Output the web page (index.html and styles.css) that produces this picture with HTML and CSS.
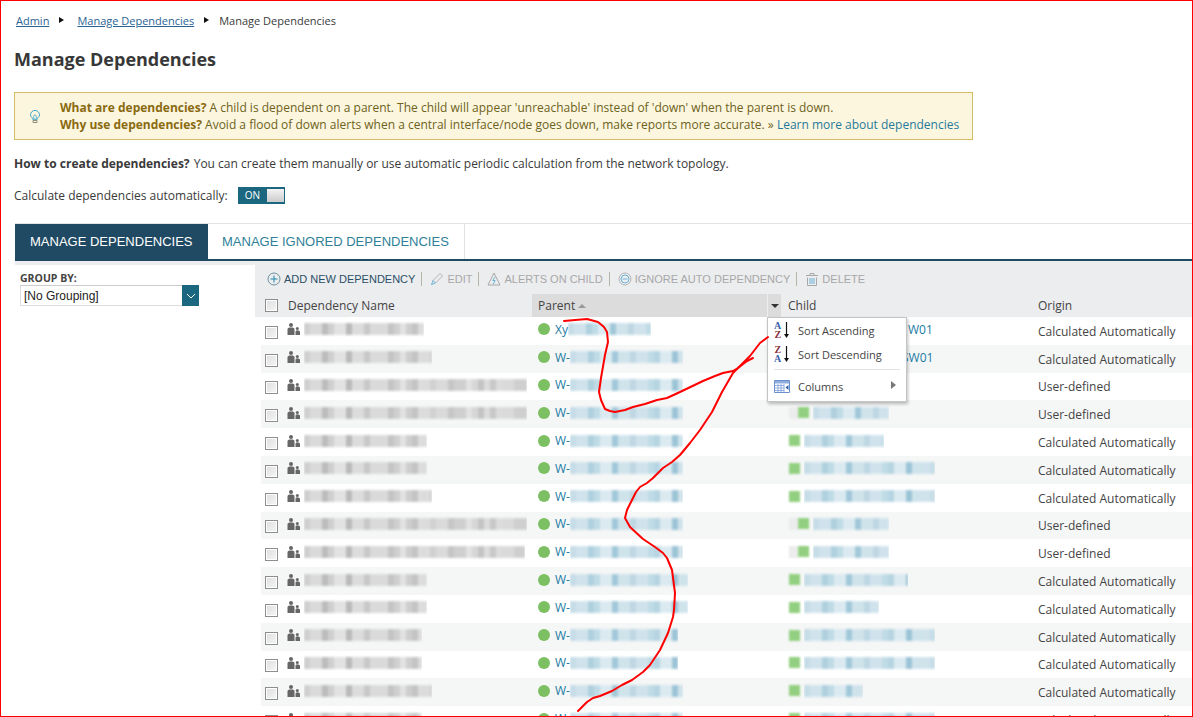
FILE: index.html
```html
<!DOCTYPE html>
<html lang="en">
<head>
<meta charset="utf-8">
<title>Manage Dependencies</title>
<link rel="stylesheet" href="styles.css">
</head>
<body>
<svg width="0" height="0" class="defs"><defs><symbol id="people" viewBox="0 0 13 12"><circle cx="4" cy="2" r="2"/><path d="M0.500 12V6.500C.5 5 1.500 4.500 4 4.500S7.500 5 7.500 6.500V12z"/><circle cx="10.300" cy="5.500" r="1.500"/><path d="M8.500 12V9c0-1 .5-1.700 1.800-1.700S13 8 13 9v3z"/></symbol></defs></svg>
<div class="frame">
  <nav class="crumbs">
    <a href="#">Admin</a><span class="crumb-arrow"></span>
    <a href="#">Manage Dependencies</a><span class="crumb-arrow crumb-arrow-last"></span>
    <span>Manage Dependencies</span>
  </nav>
  <h1 class="title">Manage Dependencies</h1>
  <div class="hint">
    <svg class="hint-icon" viewBox="0 0 10 13" width="10" height="13"><path d="M2.700 8.300C1.500 7.500.5 6.400.5 4.900a4.500 4.500 0 0 1 9 0c0 1.500-1 2.600-2.200 3.400v1H2.700z" fill="none" stroke="#3ea3cc"/><path d="M3.700 8.800V6.300a1.300 1.300 0 0 1 2.600 0v2.500" fill="none" stroke="#3ea3cc" stroke-width=".8"/><path d="M3 10.500h4V12.500H3z" fill="none" stroke="#8f8f7a"/></svg>
    <div class="hint-text">
      <p><b>What are dependencies?</b> A child is dependent on a parent. The child will appear 'unreachable' instead of 'down' when the parent is down.</p>
      <p><b>Why use dependencies?</b> Avoid a flood of down alerts when a central interface/node goes down, make reports more accurate. » <a href="#">Learn more about dependencies</a></p>
    </div>
  </div>
  <p class="howto"><b>How to create dependencies?</b> You can create them manually or use automatic periodic calculation from the network topology.</p>
  <div class="auto">
    <span>Calculate dependencies automatically:</span>
    <span class="toggle"><span class="toggle-on">ON</span><span class="toggle-knob"></span></span>
  </div>
  <div class="tabs">
    <div class="tab tab-active">MANAGE DEPENDENCIES</div>
    <div class="tab">MANAGE IGNORED DEPENDENCIES</div>
  </div>
  <div class="panel">
    <aside class="side">
      <div class="group-label">GROUP BY:</div>
      <div class="select"><span class="select-value">[No Grouping]</span><span class="select-btn"><svg viewBox="0 0 10 6" width="10" height="6"><path d="M1 1l4 4 4-4" fill="none" stroke="#fff"/></svg></span></div>
    </aside>
    <main class="main">
      <div class="toolbar">
        <span class="tool tool-on"><svg viewBox="0 0 14 14" width="14" height="14"><circle cx="7" cy="7" r="6" fill="none" stroke="#6f8f9f"/><path d="M7 3.500v7M3.500 7h7" stroke="#1f86ad"/></svg>ADD NEW DEPENDENCY</span>
        <span class="tool-sep"></span>
        <span class="tool"><svg viewBox="0 0 14 14" width="14" height="14"><path d="M3 8.500L10 1.500l2.500 2.500-7 7" fill="none" stroke="#b5b5b5"/><path d="M3 8.500L1.500 12.500 5.500 11z" fill="none" stroke="#6db3d3"/></svg>EDIT</span>
        <span class="tool-sep"></span>
        <span class="tool"><svg viewBox="0 0 14 14" width="14" height="14"><path d="M7 1l6 12H1z" fill="none" stroke="#a8a8a8"/><path d="M8 5L5.800 8.500h2.300L6.300 12" fill="none" stroke="#6db3d3"/></svg>ALERTS ON CHILD</span>
        <span class="tool-sep"></span>
        <span class="tool"><svg viewBox="0 0 14 14" width="14" height="14"><circle cx="7" cy="7" r="6" fill="none" stroke="#b5b5b5"/><circle cx="7" cy="7" r="4" fill="none" stroke="#6db3d3"/><path d="M4.500 7h5" stroke="#6db3d3"/></svg>IGNORE AUTO DEPENDENCY</span>
        <span class="tool-sep"></span>
        <span class="tool"><svg viewBox="0 0 14 14" width="14" height="14"><path d="M1 3.500h12M5 3.500V1.500h4v2M2.500 5.500v8h9v-8" fill="none" stroke="#a8a8a8"/><path d="M5 6v6M7 6v6M9 6v6" stroke="#6db3d3"/></svg>DELETE</span>
      </div>
      <div class="grid-head">
        <div class="cell c-check"><span class="check"></span></div>
        <div class="cell c-name">Dependency Name</div>
        <div class="cell c-parent head-sorted">Parent <span class="sort-up"></span></div>
        <div class="cell c-trigger"><span class="sort-down"></span></div>
        <div class="cell c-child">Child</div>
        <div class="cell c-origin">Origin</div>
      </div>
      <div class="rows">
        <div class="row"><div class="cell c-check"><span class="check"></span></div><div class="cell c-name"><svg class="people"><use href="#people"/></svg><span class="blur blur-grey" style="width:120px"></span></div><div class="cell c-parent"><span class="dot"></span><a class="link">Xy</a><span class="blur blur-blue" style="width:83px"></span></div><div class="cell c-child"><a class="link child-w">W01</a></div><div class="cell c-origin">Calculated Automatically</div></div>
        <div class="row"><div class="cell c-check"><span class="check"></span></div><div class="cell c-name"><svg class="people"><use href="#people"/></svg><span class="blur blur-grey" style="width:128px"></span></div><div class="cell c-parent"><span class="dot"></span><a class="link">W-</a><span class="blur blur-blue" style="width:113px"></span></div><div class="cell c-child"><a class="link child-s">SW01</a></div><div class="cell c-origin">Calculated Automatically</div></div>
        <div class="row"><div class="cell c-check"><span class="check"></span></div><div class="cell c-name"><svg class="people"><use href="#people"/></svg><span class="blur blur-grey" style="width:223px"></span></div><div class="cell c-parent"><span class="dot"></span><a class="link">W-</a><span class="blur blur-blue" style="width:113px"></span></div><div class="cell c-child"></div><div class="cell c-origin">User-defined</div></div>
        <div class="row"><div class="cell c-check"><span class="check"></span></div><div class="cell c-name"><svg class="people"><use href="#people"/></svg><span class="blur blur-grey" style="width:223px"></span></div><div class="cell c-parent"><span class="dot"></span><a class="link">W-</a><span class="blur blur-blue" style="width:113px"></span></div><div class="cell c-child"><span class="fade"></span><span class="square"></span><span class="blur blur-blue" style="width:76px"></span></div><div class="cell c-origin">User-defined</div></div>
        <div class="row"><div class="cell c-check"><span class="check"></span></div><div class="cell c-name"><svg class="people"><use href="#people"/></svg><span class="blur blur-grey" style="width:123px"></span></div><div class="cell c-parent"><span class="dot"></span><a class="link">W-</a><span class="blur blur-blue" style="width:113px"></span></div><div class="cell c-child"><span class="square"></span><span class="blur blur-blue" style="width:80px"></span></div><div class="cell c-origin">Calculated Automatically</div></div>
        <div class="row"><div class="cell c-check"><span class="check"></span></div><div class="cell c-name"><svg class="people"><use href="#people"/></svg><span class="blur blur-grey" style="width:123px"></span></div><div class="cell c-parent"><span class="dot"></span><a class="link">W-</a><span class="blur blur-blue" style="width:113px"></span></div><div class="cell c-child"><span class="square"></span><span class="blur blur-blue" style="width:131px"></span></div><div class="cell c-origin">Calculated Automatically</div></div>
        <div class="row"><div class="cell c-check"><span class="check"></span></div><div class="cell c-name"><svg class="people"><use href="#people"/></svg><span class="blur blur-grey" style="width:128px"></span></div><div class="cell c-parent"><span class="dot"></span><a class="link">W-</a><span class="blur blur-blue" style="width:113px"></span></div><div class="cell c-child"><span class="square"></span><span class="blur blur-blue" style="width:131px"></span></div><div class="cell c-origin">Calculated Automatically</div></div>
        <div class="row"><div class="cell c-check"><span class="check"></span></div><div class="cell c-name"><svg class="people"><use href="#people"/></svg><span class="blur blur-grey" style="width:223px"></span></div><div class="cell c-parent"><span class="dot"></span><a class="link">W-</a><span class="blur blur-blue" style="width:113px"></span></div><div class="cell c-child"><span class="fade"></span><span class="square"></span><span class="blur blur-blue" style="width:76px"></span></div><div class="cell c-origin">User-defined</div></div>
        <div class="row"><div class="cell c-check"><span class="check"></span></div><div class="cell c-name"><svg class="people"><use href="#people"/></svg><span class="blur blur-grey" style="width:221px"></span></div><div class="cell c-parent"><span class="dot"></span><a class="link">W-</a><span class="blur blur-blue" style="width:113px"></span></div><div class="cell c-child"><span class="fade"></span><span class="square"></span><span class="blur blur-blue" style="width:76px"></span></div><div class="cell c-origin">User-defined</div></div>
        <div class="row"><div class="cell c-check"><span class="check"></span></div><div class="cell c-name"><svg class="people"><use href="#people"/></svg><span class="blur blur-grey" style="width:123px"></span></div><div class="cell c-parent"><span class="dot"></span><a class="link">W-</a><span class="blur blur-blue" style="width:118px"></span></div><div class="cell c-child"><span class="square"></span><span class="blur blur-blue" style="width:104px"></span></div><div class="cell c-origin">Calculated Automatically</div></div>
        <div class="row"><div class="cell c-check"><span class="check"></span></div><div class="cell c-name"><svg class="people"><use href="#people"/></svg><span class="blur blur-grey" style="width:123px"></span></div><div class="cell c-parent"><span class="dot"></span><a class="link">W-</a><span class="blur blur-blue" style="width:118px"></span></div><div class="cell c-child"><span class="square"></span><span class="blur blur-blue" style="width:75px"></span></div><div class="cell c-origin">Calculated Automatically</div></div>
        <div class="row"><div class="cell c-check"><span class="check"></span></div><div class="cell c-name"><svg class="people"><use href="#people"/></svg><span class="blur blur-grey" style="width:118px"></span></div><div class="cell c-parent"><span class="dot"></span><a class="link">W-</a><span class="blur blur-blue" style="width:108px"></span></div><div class="cell c-child"><span class="square"></span><span class="blur blur-blue" style="width:131px"></span></div><div class="cell c-origin">Calculated Automatically</div></div>
        <div class="row"><div class="cell c-check"><span class="check"></span></div><div class="cell c-name"><svg class="people"><use href="#people"/></svg><span class="blur blur-grey" style="width:118px"></span></div><div class="cell c-parent"><span class="dot"></span><a class="link">W-</a><span class="blur blur-blue" style="width:108px"></span></div><div class="cell c-child"><span class="square"></span><span class="blur blur-blue" style="width:131px"></span></div><div class="cell c-origin">Calculated Automatically</div></div>
        <div class="row"><div class="cell c-check"><span class="check"></span></div><div class="cell c-name"><svg class="people"><use href="#people"/></svg><span class="blur blur-grey" style="width:128px"></span></div><div class="cell c-parent"><span class="dot"></span><a class="link">W-</a><span class="blur blur-blue" style="width:113px"></span></div><div class="cell c-child"><span class="square"></span><span class="blur blur-blue" style="width:59px"></span></div><div class="cell c-origin">Calculated Automatically</div></div>
        <div class="row"><div class="cell c-check"><span class="check"></span></div><div class="cell c-name"><svg class="people"><use href="#people"/></svg><span class="blur blur-grey" style="width:118px"></span></div><div class="cell c-parent"><span class="dot"></span><a class="link">W-</a><span class="blur blur-blue" style="width:113px"></span></div><div class="cell c-child"><span class="square"></span><span class="blur blur-blue" style="width:131px"></span></div><div class="cell c-origin">Calculated Automatically</div></div>
      </div>
    </main>
  </div>
  <div class="menu">
    <div class="menu-item"><svg viewBox="0 0 18 18" width="18" height="18"><text x="0" y="8" class="az-a">A</text><text x="0.500" y="16.500" class="az-z">Z</text><path d="M12.500 1v13" stroke="#111" stroke-width="1.200"/><path d="M10 13l2.500 4 2.500-4z" fill="#111"/></svg>Sort Ascending</div>
    <div class="menu-item"><svg viewBox="0 0 18 18" width="18" height="18"><text x="0.500" y="8" class="az-z">Z</text><text x="0" y="16.500" class="az-a">A</text><path d="M12.500 1v13" stroke="#111" stroke-width="1.200"/><path d="M10 13l2.500 4 2.500-4z" fill="#111"/></svg>Sort Descending</div>
    <div class="menu-sep"></div>
    <div class="menu-item menu-cols"><svg viewBox="0 0 16 13" width="16" height="13"><path d="M.5.500h15v12H.5z" fill="#fff" stroke="#6a8fca"/><path d="M1 1h14v2.500H1z" fill="#8fadde"/><path d="M1 5.500h9M1 8h9M1 10.500h9M4 4v8M7 4v8M10 4v8" stroke="#8fadde"/><path d="M14.500 5l-3 2.500 3 2.500z" fill="#2f5fa8"/></svg>Columns<span class="menu-arrow"></span></div>
  </div>
  <svg class="scribble" viewBox="0 0 1193 717" width="1193" height="717">
    <path d="M564 321L575 320L587 319L598 322L604 327L607 332L608 342L605 355L601 378L599 392L601 400L605 409L610 411L615 412L625 410L633 407L645 404L657 400L667 398L680 392L703 381L715 376L723 373L733 371L738 368L747 361L753 358"/>
    <path d="M768 337L760 343L750 356L743 363L733 373L722 392L712 412L700 430L690 443L680 455L672 462L663 468L653 478L647 483L640 487L636 492L627 510L625 518L630 527L643 539L655 547L663 553L667 558L672 570L675 593L674 610L673 617L668 633L660 650L650 665L643 672L632 680L622 685L612 691L600 696L593 698L587 702L578 711"/>
  </svg>
</div>
</body>
</html>
```
FILE: styles.css
```css
* { box-sizing: border-box; }
html, body { margin: 0; height: 717px; overflow: hidden; background: #fff; }
body { font-family: "Open Sans", sans-serif; color: #3a3a3a; font-size: 12px; }
p { margin: 0; }
.defs { position: absolute; }
.frame { position: relative; width: 1193px; height: 717px; overflow: hidden; border: 1px solid #f00; padding: 0 0 0 13px; }
.crumbs { display: flex; align-items: center; height: 18px; margin: 10px 0 0 2px; font-size: 11px; }
.crumbs a { color: #2a6496; text-decoration: underline; }
.crumb-arrow { width: 0; height: 0; margin: 0 13px 0 10px; border-left: 5px solid #111; border-top: 3.500px solid transparent; border-bottom: 3.500px solid transparent; }
.crumb-arrow-last { margin-right: 10px; }
.title { margin: 17px 0 0; font-size: 18px; line-height: 26px; font-weight: 700; color: #383838; }
.hint { display: flex; align-items: center; width: 959px; height: 48px; margin-top: 20px; background: #fcf6df; border: 1px solid #d3bd65; line-height: 17px; color: #6d6220; }
.hint-icon { margin: 0 20px 0 15px; flex: none; }
.hint-text b { color: #8a6a10; }
.hint-text a { color: #1f7a9c; text-decoration: none; }
.howto { margin-top: 15px; line-height: 18px; }
.howto b { margin-right: 1px; }
.auto { display: flex; align-items: center; height: 18px; margin-top: 13px; }
.toggle { display: flex; align-items: center; width: 47px; height: 17px; margin-left: 10px; background: #1b6780; padding: 2px 1px 2px 2px; }
.toggle-on { flex: 1; padding-left: 5px; color: #fff; font-size: 10px; line-height: 13px; }
.toggle-knob { width: 17px; height: 13px; background: linear-gradient(#f3f3f3, #ccc); }
.tabs { display: flex; height: 38px; margin: 19px -13px 0 1px; border-top: 1px solid #e2e2e2; border-bottom: 2px solid #204a63; }
.tab { display: flex; align-items: center; padding: 0 15px 0 14px; font-family: "Liberation Sans", sans-serif; font-size: 13px; color: #2f7f99; border-right: 1px solid #e2e2e2; }
.tab-active { width: 193px; padding: 0 0 0 15px; background: #204a63; color: #fff; border-right: 0; }
.panel { display: flex; height: 460px; margin: 0 -13px 0 1px; padding-top: 4px; background: linear-gradient(#ecedef 4px, #fff 4px); }
.side { width: 240px; padding: 6px 5px 0; background: #fff; }
.group-label { font-size: 10.500px; font-weight: 700; line-height: 14px; color: #444; }
.select { display: flex; width: 179px; height: 21px; border: 1px solid #ddd; border-top-color: #ccc; }
.select-value { flex: 1; padding-left: 3px; font-family: "Liberation Sans", sans-serif; font-size: 12px; line-height: 20px; color: #222; }
.select-btn { display: flex; align-items: center; justify-content: center; width: 17px; margin: -1px -1px -1px 0; background: #1b6780; }
.main { flex: 1; min-width: 0; background: #ecedef; }
.toolbar { display: flex; align-items: center; height: 29px; padding: 0 0 2px 12px; font-family: "Liberation Sans", sans-serif; font-size: 11px; color: #a8a8a8; }
.tool { display: inline-flex; align-items: center; gap: 3px; }
.tool-on { color: #2b4f66; }
.tool-sep { width: 1px; height: 14px; margin: 0 8px 0 6px; background: #b5b5a8; }
.grid-head, .row { display: grid; margin-left: 6px; }
.grid-head { height: 23px; grid-template-columns: 27px 244px 235px 14px 7px 250px 1fr; align-items: center; color: #444; }
.grid-head .c-child { grid-column: 6; }
.grid-head .c-origin { grid-column: 7; }
.grid-head .c-trigger { grid-column: 4; }
.cell { display: flex; align-items: center; white-space: nowrap; min-width: 0; height: 100%; }
.head-sorted { background: #dcdcdc; padding-left: 6px; gap: 3px; }
.c-trigger { background: #dcdcdc; justify-content: center; margin-left: 1px; }
.sort-up { width: 0; height: 0; border: 4px solid transparent; border-bottom: 4px solid #999; border-top: 0; }
.sort-down { width: 0; height: 0; border: 4px solid transparent; border-top: 4px solid #333; border-bottom: 0; }
.c-check { padding-left: 4px; }
.check { width: 13px; height: 13px; border: 1px solid #8e8e8e; background: linear-gradient(135deg, #dedede, #f6f6f6); box-shadow: inset 0 0 0 1px #fff; }
.rows { background: #fff; }
.row { margin-left: 6px; height: 27.800px; grid-template-columns: 27px 244px 256px 250px 1fr; background: #fff; }
.row:nth-child(even) { background: #f5f6f6; }
.row .c-check .check { margin-top: 3px; }
.row .c-name { gap: 4px; margin-left: -1px; }
.people { flex: none; width: 13px; height: 12px; fill: #666; margin-top: -3px; }
.blur { display: inline-block; height: 16px; margin-top: -3px; filter: blur(1px); -webkit-mask-image: linear-gradient(transparent, #000 25%, #000 75%, transparent); mask-image: linear-gradient(transparent, #000 25%, #000 75%, transparent); }
.blur-grey { background: repeating-linear-gradient(90deg, rgba(0, 0, 0, .05) 0 6px, transparent 6px 18px, rgba(0, 0, 0, .09) 18px 24px, transparent 24px 42px), repeating-linear-gradient(90deg, #dadada 0 18px, #cfcfcf 18px 30px, #e2e2e2 30px 42px, #c4c4c4 42px 48px, #dcdcdc 48px 66px); }
.blur-blue { background: repeating-linear-gradient(90deg, rgba(40, 110, 150, .06) 0 6px, transparent 6px 18px, rgba(40, 110, 150, .1) 18px 24px, transparent 24px 42px), repeating-linear-gradient(90deg, #d0e3ec 0 18px, #bfdbe6 18px 30px, #dbeaf0 30px 42px, #a9cede 42px 48px, #cfe3eb 48px 60px); }
.c-parent { padding-left: 6px; }
.dot { width: 12px; height: 12px; margin: -3px 5px 0 0; border-radius: 50%; background: #7cc063; flex: none; }
.link { color: #1a7ca5; margin-top: -3px; }
.row .c-child { padding-left: 1px; }
.fade { width: 9px; height: 12px; margin-top: -3px; background: #ececec; filter: blur(1px); }
.square { width: 11px; height: 11px; margin: -3px 4px 0 0; background: #92cf80; filter: blur(1px); }
.child-w { margin-left: 119px; }
.child-s { margin-left: 113px; }
.row .c-origin { color: #444; padding-top: 1px; }
.menu { position: absolute; left: 766px; top: 316px; width: 140px; height: 85px; background: #fff; border: 1px solid #c4c4c4; box-shadow: 1px 2px 3px rgba(0, 0, 0, .25); font-size: 11px; color: #444; }
.menu-item { display: flex; align-items: center; height: 24px; padding-left: 6px; gap: 6px; }
.menu-sep { height: 1px; margin: 3px 6px; background: #e3e3e3; }
.menu-cols { position: relative; height: 26px; gap: 8px; padding-left: 6px; }
.menu-arrow { position: absolute; right: 10px; top: 8px; width: 0; height: 0; border-left: 5px solid #777; border-top: 4px solid transparent; border-bottom: 4px solid transparent; }
.az-a { font: 700 10px "Liberation Serif", serif; fill: #3b5fa8; }
.az-z { font: 700 10px "Liberation Serif", serif; fill: #8a3040; }
.scribble { position: absolute; left: -1px; top: -1px; pointer-events: none; fill: none; stroke: #f00; stroke-width: 2; stroke-linecap: round; stroke-linejoin: round; }
```
